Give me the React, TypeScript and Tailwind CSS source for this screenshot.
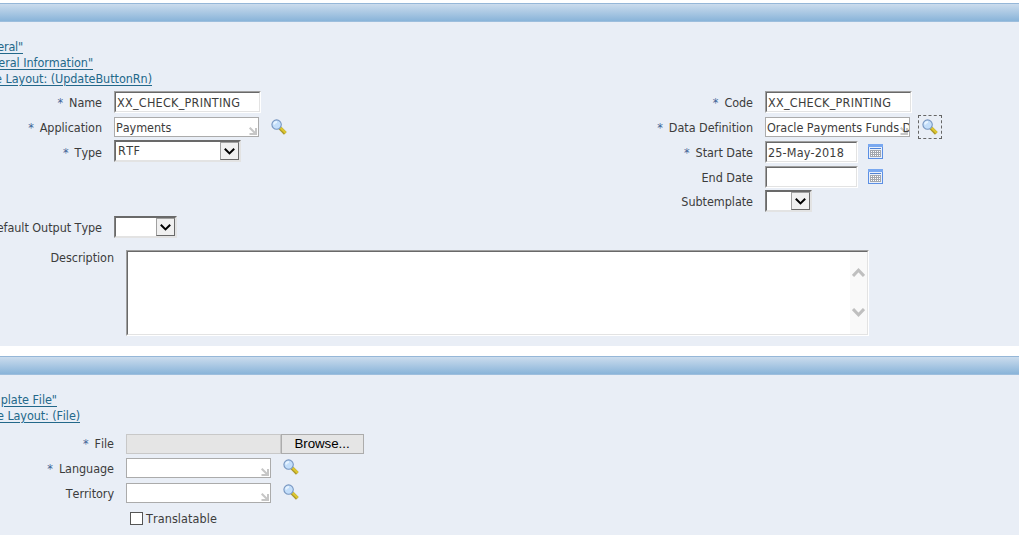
import type { ReactNode } from 'react';

interface LabelProps {
  children: ReactNode;
  required?: boolean;
  className?: string;
}

const sunken = 'border border-t-[#a0a0a0] border-l-[#a0a0a0] border-r-white border-b-white bg-white';
const sunkenInner = 'h-full w-full border border-t-[#696969] border-l-[#696969] border-r-[#e3e3e3] border-b-[#e3e3e3] overflow-hidden';

const HeaderBar = () => (
  <div className="h-[19px] w-full border-y border-t-[#95b7d8] border-b-[#9dbedd] bg-gradient-to-b from-[#cbdced] to-[#89b4d9]" />
);

const CustomizeLink = ({ children, className }: { children: ReactNode; className: string }) => (
  <div className={`flex h-4 justify-end overflow-hidden ${className}`}>
    <a href="#" className="shrink-0 whitespace-nowrap leading-4 text-[#23688a] underline underline-offset-2">{children}</a>
  </div>
);

const Label = ({ children, required, className = '' }: LabelProps) => (
  <label className={`flex shrink-0 justify-end whitespace-nowrap leading-[26px] ${className}`}>
    {required && <span className="mr-[6px] text-[#3f6496]">*</span>}
    <span>{children}</span>
  </label>
);

const TextBox = ({ value = '', className }: { value?: string; className: string }) => (
  <div className={`mt-px h-[22px] shrink-0 ${sunken} ${className}`}>
    <div className={`${sunkenInner} whitespace-nowrap pl-px leading-[20px]`}>{value}</div>
  </div>
);

const LovBox = ({ value = '' }: { value?: string }) => (
  <div className="relative mt-[2px] h-5 w-[145px] shrink-0 overflow-hidden whitespace-nowrap border border-[#ababab] bg-white pl-px leading-[19px]">
    <svg className="absolute bottom-px right-px" width="8" height="8" viewBox="0 0 8 8" fill="none" stroke="#c6c6c6">
      <path d="M0.7 0.7 6 6" strokeWidth="2" />
      <path d="M7 1v6H0.5" strokeWidth="2" />
    </svg>
    <span className="relative">{value}</span>
  </div>
);

const SelectBox = ({ value = '', className }: { value?: string; className: string }) => (
  <div className={`h-[22px] shrink-0 border border-t-[#696969] border-l-[#808080] border-r-[#e3e3e3] border-b-[#e3e3e3] bg-white ${className}`}>
    <div className="flex h-full justify-between border border-t-[#696969] border-l-[#696969] border-r-[#e3e3e3] border-b-[#e3e3e3]">
      <span className="pl-[2px] leading-[18px]">{value}</span>
      <span className="flex h-[18px] w-[19px] items-center justify-center border border-t-[#a0a0a0] border-l-[#a0a0a0] border-r-[#696969] border-b-[#696969] bg-[#f0f0f0]">
        <svg width="11" height="7" viewBox="0 0 11 7" fill="none" stroke="#000" strokeWidth="2">
          <path d="M0.8 0.8 5.5 5.4 10.2 0.8" />
        </svg>
      </span>
    </div>
  </div>
);

const SearchIcon = () => (
  <svg width="16" height="16" viewBox="0 0 16 16" fill="none">
    <path d="M9 9 14.3 14.3" stroke="#a8952a" strokeWidth="3.8" />
    <path d="M9.3 8.6 14.7 13.9" stroke="#dcc62f" strokeWidth="2.2" />
    <circle cx="5.6" cy="5.6" r="4.7" fill="#c3defa" stroke="#7796c0" strokeWidth="1.1" />
    <path d="M3 5.5A3 3 0 0 1 6 3" stroke="#e6f3ff" strokeWidth="1.8" />
  </svg>
);

const CalendarIcon = () => (
  <svg width="15" height="15" viewBox="0 0 15 15" shapeRendering="crispEdges">
    <rect width="15" height="15" fill="#5b8fe4" />
    <rect width="15" height="3" fill="#79a8f0" />
    <rect x="1" y="3" width="13" height="11" fill="#e9f0fb" />
    <rect x="2" y="4" width="11" height="1" fill="#4f82d4" />
    <rect x="2" y="6" width="11" height="7" fill="#a3a7ae" />
    {[7, 9, 11].map((y) => [3, 5, 7, 9, 11].map((x) => <rect key={`${x}-${y}`} x={x} y={y} width="1" height="1" fill="#fff" />))}
  </svg>
);

const ScrollArrow = ({ d }: { d: string }) => (
  <svg width="13" height="9" viewBox="0 0 13 9" fill="none" stroke="#bfbfbf" strokeWidth="3">
    <path d={d} />
  </svg>
);

const Row = ({ children }: { children?: ReactNode }) => <div className="flex h-[25px] items-start">{children}</div>;

const GeneralSection = () => (
  <section className="h-[343px] bg-[#e9eef6]">
    <HeaderBar />
    <div className="pt-[17px]">
      <CustomizeLink className="w-[23px] tracking-[-0.2px]">eral"</CustomizeLink>
      <CustomizeLink className="w-[93px]">eral Information"</CustomizeLink>
      <CustomizeLink className="w-[152px]">e Layout: (UpdateButtonRn)</CustomizeLink>
    </div>
    <div className="flex pt-[3px]">
      <div className="w-[651px]">
        <Row>
          <Label required className="mr-3 w-[102px]">Name</Label>
          <TextBox value="XX_CHECK_PRINTING" className="w-[147px] tracking-[0.25px]" />
        </Row>
        <Row>
          <Label required className="mr-3 w-[102px]">Application</Label>
          <LovBox value="Payments" />
          <span className="ml-3 mt-[4px]"><SearchIcon /></span>
        </Row>
        <Row>
          <Label required className="mr-3 w-[102px]">Type</Label>
          <SelectBox value="RTF" className="w-[127px] tracking-[0.4px]" />
        </Row>
        <Row />
        <Row />
        <Row>
          <Label className="mr-3 w-[102px]">efault Output Type</Label>
          <div className="mt-px"><SelectBox className="w-[63px]" /></div>
        </Row>
      </div>
      <div>
        <Row>
          <Label required className="mr-3 w-[102px]">Code</Label>
          <TextBox value="XX_CHECK_PRINTING" className="w-[147px] tracking-[0.25px]" />
        </Row>
        <Row>
          <Label required className="mr-3 w-[102px]">Data Definition</Label>
          <LovBox value="Oracle Payments Funds D" />
          <span className="ml-2 flex h-6 w-6 border border-dashed border-[#666] pl-[3px] pt-[3px]"><SearchIcon /></span>
        </Row>
        <Row>
          <Label required className="mr-3 w-[102px]">Start Date</Label>
          <TextBox value="25-May-2018" className="w-[93px] tracking-[0.15px]" />
          <span className="ml-[10px] mt-[4px]"><CalendarIcon /></span>
        </Row>
        <Row>
          <Label className="mr-3 w-[102px]">End Date</Label>
          <TextBox className="w-[93px]" />
          <span className="ml-[10px] mt-[4px]"><CalendarIcon /></span>
        </Row>
        <Row>
          <Label className="mr-3 mt-[-1px] w-[102px]">Subtemplate</Label>
          <SelectBox className="w-[47px]" />
        </Row>
      </div>
    </div>
    <div className="flex pt-[10px]">
      <Label className="mr-3 mt-[-5px] w-[114px]">Description</Label>
      <div className={`h-[86px] w-[743px] ${sunken}`}>
        <div className={`${sunkenInner} flex justify-end`}>
          <div className="flex w-[17px] flex-col items-center justify-between bg-[#f9f9f9] pb-[17px] pt-[16px]">
            <ScrollArrow d="M1 8 6.5 2.2 12 8" />
            <ScrollArrow d="M1 1 6.5 6.8 12 1" />
          </div>
        </div>
      </div>
    </div>
  </section>
);

const FileSection = () => (
  <section className="mt-[10px] h-[179px] bg-[#e9eef6]">
    <HeaderBar />
    <div className="pt-[17px]">
      <CustomizeLink className="w-[57px]">plate File"</CustomizeLink>
      <CustomizeLink className="w-[80px] tracking-[-0.1px]">e Layout: (File)</CustomizeLink>
    </div>
    <div className="pt-[7px]">
      <Row>
        <Label required className="mr-3 w-[114px]">File</Label>
        <div className="mt-[3px] h-5 w-[155px] border border-[#c8c8c8] bg-[#e5e5e5]" />
        <button className="mt-[3px] h-5 w-[83px] border border-[#acacac] bg-[#e5e5e5] pr-px font-['Liberation_Sans'] text-[13.33px] leading-[18px] tracking-[-0.05px] text-black">Browse...</button>
      </Row>
      <Row>
        <Label required className="mr-3 w-[114px]">Language</Label>
        <LovBox />
        <span className="ml-3 mt-[3px]"><SearchIcon /></span>
      </Row>
      <Row>
        <Label className="mr-3 w-[114px]">Territory</Label>
        <LovBox />
        <span className="ml-3 mt-[3px]"><SearchIcon /></span>
      </Row>
      <div className="flex items-center pl-[130px] pt-[4px]">
        <span className="mr-[3px] h-[13px] w-[13px] border border-[#555] bg-white" />
        <span className="pt-px leading-4 tracking-[0.1px]">Translatable</span>
      </div>
    </div>
  </section>
);

export default function App() {
  return (
    <div className="h-[535px] w-[1019px] overflow-hidden bg-white pt-[3px] font-['DejaVu_Sans_Condensed','DejaVu_Sans',sans-serif] text-[12.5px] tracking-[-0.05px] text-[#3c3c3c] [font-kerning:none]">
      <GeneralSection />
      <FileSection />
    </div>
  );
}
